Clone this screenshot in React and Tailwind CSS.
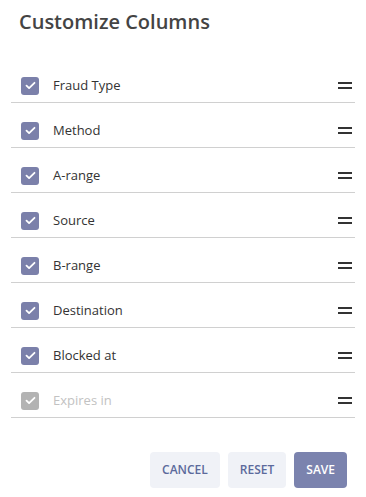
import React from "react";

const items = [
  { label: "Fraud Type", disabled: false },
  { label: "Method", disabled: false },
  { label: "A-range", disabled: false },
  { label: "Source", disabled: false },
  { label: "B-range", disabled: false },
  { label: "Destination", disabled: false },
  { label: "Blocked at", disabled: false },
  { label: "Expires in", disabled: true },
];

function Check({ disabled }) {
  return (
    <div
      className={
        "w-[18px] h-[18px] rounded-[3px] flex items-center justify-center shrink-0 " +
        (disabled ? "bg-[#b3b3b3]" : "bg-[#7b80aa]")
      }
    >
      <svg width="11" height="9" viewBox="0 0 11 9" fill="none">
        <path d="M1.5 4.6L4.1 7.1L9.5 1.8" stroke="white" strokeWidth="1.8" strokeLinecap="round" strokeLinejoin="round" />
      </svg>
    </div>
  );
}

export default function App() {
  return (
    <div className="w-[366px] h-[497px] bg-white font-['Open_Sans',sans-serif]">
      <div className="pl-[19px] pt-[8px] h-[58px]">
        <h1 className="text-[20px] leading-[28px] font-semibold text-[#444444]">Customize Columns</h1>
      </div>
      <div className="mx-[11px]">
        {items.map((it) => (
          <div key={it.label} className="h-[45px] border-b border-[#d0d0d0] flex items-center pt-[11px] pl-[10px] pr-[3px]">
            <Check disabled={it.disabled} />
            <span className={"ml-[14px] text-[13px] " + (it.disabled ? "text-[#c2c2c2]" : "text-[#333333]")}>{it.label}</span>
            <div className="ml-auto flex flex-col gap-[3px] w-[14px]">
              <div className="h-[2px] bg-[#333333]" />
              <div className="h-[2px] bg-[#333333]" />
            </div>
          </div>
        ))}
      </div>
      <div className="flex justify-end gap-[8px] pr-[19px] pt-[34px]">
        <button className="h-[36px] px-[12px] rounded-[4px] bg-[#f0f2f7] text-[#5c6a9c] text-[12px] font-semibold">CANCEL</button>
        <button className="h-[36px] px-[12px] rounded-[4px] bg-[#f0f2f7] text-[#5c6a9c] text-[12px] font-semibold">RESET</button>
        <button className="h-[36px] px-[12px] rounded-[4px] bg-[#7b83ae] text-white text-[12px] font-semibold">SAVE</button>
      </div>
    </div>
  );
}
